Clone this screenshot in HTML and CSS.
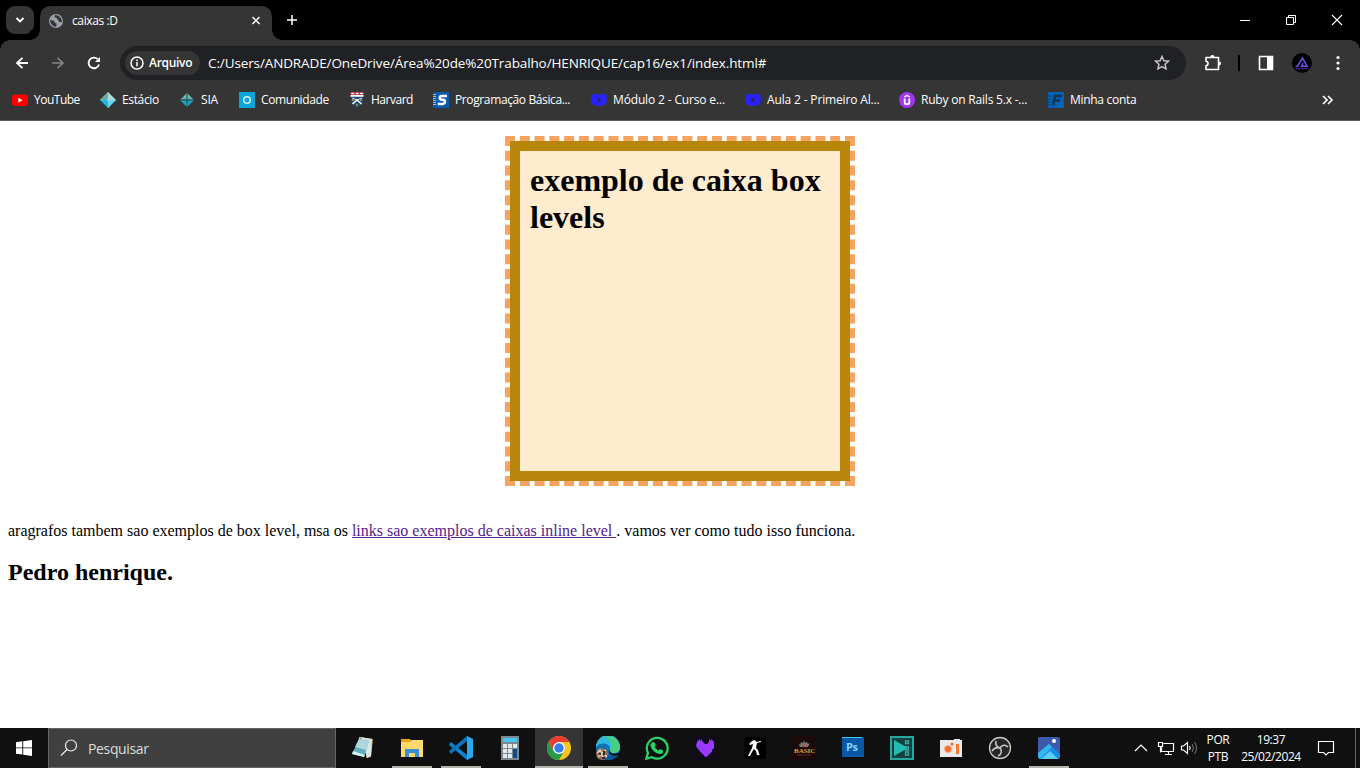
FILE: index.html
```html
<!DOCTYPE html>
<html lang="pt-BR">
<head>
<meta charset="utf-8">
<title>caixas :D</title>
<link rel="stylesheet" href="styles.css">
</head>
<body>
<div class="screen">
  <header class="tabstrip">
    <div class="tab-search"><svg width="28" height="28" viewBox="0 0 28 28"><path d="M10.500 12l3.500 3.500 3.500-3.500" fill="none" stroke="#fff" stroke-width="1.800"/></svg></div>
    <div class="tab">
      <svg class="globe" width="16" height="16" viewBox="0 0 16 16"><circle cx="8" cy="8" r="7" fill="#9aa0a6"/><path d="M2 7c3 0 5 1 5 3 2 0 2 1 1 4-4-1-6-4-6-7zM7 2c-1 2 0 3 2 3 0 2 2 2 2 4h3c0-4-3-7-7-7z" fill="#35363a"/></svg>
      <span class="tab-title">caixas :D</span>
      <svg width="16" height="16" viewBox="0 0 16 16"><path d="M4.500 4l7 7m0-7l-7 7" stroke="#fff" stroke-width="1.500"/></svg>
    </div>
    <svg class="new-tab" width="16" height="16" viewBox="0 0 16 16"><path d="M8 3v10M3 8h10" stroke="#fff" stroke-width="1.500"/></svg>
    <div class="window-buttons">
      <svg width="46" height="40" viewBox="0 0 46 40"><path d="M18 20.500h10" stroke="#fff"/></svg>
      <svg width="46" height="40" viewBox="0 0 46 40"><path d="M18.500 17.500h7v7h-7zM20.500 17.500v-2h7v7h-2" fill="none" stroke="#fff"/></svg>
      <svg width="46" height="40" viewBox="0 0 46 40"><path d="M18 15l10 10m0-10l-10 10" stroke="#fff" stroke-width="1.100"/></svg>
    </div>
  </header>

  <section class="toolbar">
    <div class="navrow">
      <div class="nav-icons">
        <svg width="16" height="16" viewBox="0 0 16 16"><path d="M14 8H3m5.500-5.200L3 8l5.500 5.200" fill="none" stroke="#fff" stroke-width="1.800"/></svg>
        <svg width="16" height="16" viewBox="0 0 16 16"><path d="M2 8h11M7.500 2.800L13 8l-5.500 5.200" fill="none" stroke="#868686" stroke-width="1.600"/></svg>
        <svg width="16" height="16" viewBox="0 0 16 16"><path d="M13 9.500a5.300 5.300 0 1 1-1.300-5.300" fill="none" stroke="#fff" stroke-width="1.800"/><path d="M14 2v5H9z" fill="#fff"/></svg>
      </div>
      <div class="address">
        <div class="chip"><svg width="14" height="14" viewBox="0 0 14 14"><circle cx="7" cy="7" r="6" fill="none" stroke="#fff" stroke-width="1.500"/><path d="M7 6v4.300M7 3.500v1.400" stroke="#fff" stroke-width="1.500"/></svg><span>Arquivo</span></div>
        <span class="url">C:/Users/ANDRADE/OneDrive/Área%20de%20Trabalho/HENRIQUE/cap16/ex1/index.html#</span>
        <svg class="star" width="16" height="16" viewBox="0 0 16 16"><path d="M8 1.500l1.900 4.200 4.600.5-3.400 3.100.9 4.500L8 11.500l-4 2.300.9-4.500-3.400-3.100 4.600-.5z" fill="none" stroke="#c7c7c7" stroke-width="1.500"/></svg>
      </div>
      <div class="actions">
        <svg width="18" height="18" viewBox="0 0 18 18"><path d="M2 3.500h12.500v12H2v-3.700c2.700-.4 2.700-4.200 0-4.600z" fill="none" stroke="#fff" stroke-width="1.600" stroke-linejoin="round"/><path d="M6.300 3a2.100 2.100 0 0 1 4.200 0zM15 7.500a2 2 0 0 1 0 4z" fill="#fff"/></svg>
        <span class="separator"></span>
        <svg width="16" height="16" viewBox="0 0 16 16"><path d="M1.500 1.500h13v13h-13z" fill="none" stroke="#fff" stroke-width="1.600"/><path d="M9 1h6v14H9z" fill="#fff"/></svg>
        <svg width="20" height="20" viewBox="0 0 20 20"><circle cx="10" cy="10" r="10" fill="#000"/><path d="M3.500 13.200h2L10.500 5l4.500 8.200H9.500L11 10" fill="none" stroke="#6c53e8" stroke-width="1.500"/><path d="M3.500 15.500h13" stroke="#5a2a99" stroke-width="1.500" stroke-dasharray="1.500 .5"/></svg>
        <svg width="4" height="16" viewBox="0 0 4 16"><g fill="#fff"><circle cx="2" cy="2.500" r="1.600"/><circle cx="2" cy="8" r="1.600"/><circle cx="2" cy="13.500" r="1.600"/></g></svg>
      </div>
    </div>
    <nav class="bookmarks">
      <div class="bm youtube"><svg width="16" height="16" viewBox="0 0 16 16"><rect y="2.500" width="16" height="11.500" rx="3" fill="#f00"/><path d="M6.300 5.700v5l4.300-2.500z" fill="#fff"/></svg><span>YouTube</span></div>
      <div class="bm estacio"><svg width="16" height="16" viewBox="0 0 16 16"><path d="M8 0l8 8H0z" fill="#acd9d6"/><path d="M0 8h16l-8 8z" fill="#12b5da"/><path d="M8 0v8H0z" fill="#66a49f"/><path d="M8 8h8l-8 8z" fill="#66d4e8"/><path d="M4 4l8 8M8 0v16M12 4l-8 8M0 8h16" stroke="#dcefea" stroke-width=".25"/></svg><span>Estácio</span></div>
      <div class="bm sia"><svg width="16" height="16" viewBox="0 0 16 16"><path d="M8 1l7 7H1z" fill="#75bdb9"/><path d="M1 8h14l-7 7z" fill="#18afd3"/><path d="M8 1v14M1 8h14" stroke="#28565e" stroke-width="1.300"/><path d="M4 5l8 7M12 5l-8 7" stroke="#28565e" stroke-width=".4"/></svg><span>SIA</span></div>
      <div class="bm comunidade"><svg width="16" height="16" viewBox="0 0 16 16"><path d="M0 0h16v16H0z" fill="#0ba5d8"/><circle cx="8" cy="8" r="3.300" fill="none" stroke="#d9f2ed" stroke-width="1.500"/></svg><span>Comunidade</span></div>
      <div class="bm harvard"><svg width="16" height="16" viewBox="0 0 16 16"><path d="M2 3h12v6c0 3-3 5-6 6.500C5 14 2 12 2 9z" fill="#224c78"/><path d="M1.500 0h13v3.500h-13z" fill="#b42d42"/><path d="M2.200 1.500h12" stroke="#eee" stroke-width="1.500" stroke-dasharray="3 1.500"/><path d="M1.500 3.900h13M3.500 12L8 8l4.500 4" fill="none" stroke="#fff" stroke-width="1.600"/><path d="M3 6l5 2 5-2" fill="none" stroke="#fff" stroke-width=".8"/><path d="M3 8h2m6 0h2M7 13h2" stroke="#c39b34" stroke-width="1.700"/></svg><span>Harvard</span></div>
      <div class="bm programacao"><svg width="16" height="16" viewBox="0 0 16 16"><path d="M0 0h16v16H0z" fill="#075bac"/><path d="M1.500 2v12" stroke="#9cb9d3" stroke-width="3" stroke-dasharray="1 1"/><path d="M14 4H9C6 4 6 7.700 9 7.700h1.300c2.700 0 2 4.300-1 4.300H4.700" fill="none" stroke="#fff" stroke-width="2.500"/></svg><span>Programação Básica...</span></div>
      <div class="bm modulo"><svg width="16" height="16" viewBox="0 0 16 16"><path d="M1 3q2-2 4-1 3 1 6 0 2-1 4 1 1 1 .5 3.500 1 3-.8 5Q13 14 8 14t-6.700-2.500q-1.800-2-.8-5Q0 4 1 3z" fill="#2922ff"/><path d="M6.500 5.500v5l4-2.500z" fill="#24265c"/></svg><span>Módulo 2 - Curso e...</span></div>
      <div class="bm aula"><svg width="16" height="16" viewBox="0 0 16 16"><path d="M1 3q2-2 4-1 3 1 6 0 2-1 4 1 1 1 .5 3.500 1 3-.8 5Q13 14 8 14t-6.700-2.500q-1.800-2-.8-5Q0 4 1 3z" fill="#2922ff"/><path d="M6.500 5.500v5l4-2.500z" fill="#24265c"/></svg><span>Aula 2 - Primeiro Al...</span></div>
      <div class="bm ruby"><svg width="16" height="16" viewBox="0 0 16 16"><circle cx="8" cy="8" r="8" fill="#a435f0"/><path d="M5.300 5L8 3.300 10.700 5" fill="none" stroke="#fff" stroke-width="1.400"/><path d="M5.700 6.500v3.400q0 2.300 2.300 2.300t2.300-2.300V6.500" fill="none" stroke="#fff" stroke-width="1.800"/></svg><span>Ruby on Rails 5.x -...</span></div>
      <div class="bm conta"><svg width="16" height="16" viewBox="0 0 16 16"><path d="M0 0h16v16H0z" fill="#0561b2"/><path d="M0 4h4M0 7h3M0 10h3M0 13h3" stroke="#074b86"/><path d="M5 13L7 4h7M6 8.500h6" fill="none" stroke="#17334d" stroke-width="2.400"/></svg><span>Minha conta</span></div>
      <svg class="overflow" width="14" height="12" viewBox="0 0 14 12"><path d="M2 2l4 4-4 4M7 2l4 4-4 4" fill="none" stroke="#fff" stroke-width="1.700"/></svg>
    </nav>
  </section>

  <main class="page">
    <h1 class="box">exemplo de caixa box levels</h1>
    <p class="paragraph">aragrafos tambem sao exemplos de box level, msa os <a class="visited" href="#">links sao exemplos de caixas inline level </a>. vamos ver como tudo isso funciona.</p>
    <h2 class="author">Pedro henrique.</h2>
  </main>

  <footer class="taskbar">
    <div class="start"><svg width="16" height="16" viewBox="0 0 16 16"><path d="M0 2.200L6.300 1.300v6.200H0zM7.200 1.200L16 0v7.500H7.200zM0 8.300h6.300v6.200L0 13.700zM7.200 8.300H16V16l-8.800-1.300z" fill="#fff"/></svg></div>
    <div class="search"><svg width="18" height="18" viewBox="0 0 18 18"><circle cx="11" cy="6.500" r="5.500" fill="none" stroke="#eee" stroke-width="1.200"/><path d="M7 10.500l-6 6" stroke="#eee" stroke-width="1.300"/></svg><span>Pesquisar</span></div>
    <div class="apps">
      <div class="app"><svg width="24" height="24" viewBox="0 0 24 24"><path d="M8 1l14 2-2 18-5 1 5-18z" fill="#bd985b"/><path d="M9 1l12 2-1 17-4 2z" fill="#d9e8e5"/><path d="M8 3l10 2-5 16L1 18z" fill="#62aebd"/><path d="M8 3l10 2-3 9-11-3z" fill="#add7dc"/><path d="M1 18l12 3 1-2L2 15z" fill="#d7f1f1"/><path d="M8 2l12 2" stroke="#d3d3cc" stroke-width="2" stroke-dasharray="1 1"/></svg></div>
      <div class="app running"><svg width="24" height="24" viewBox="0 0 24 24"><path d="M1 3h9l2 2h11v16H1z" fill="#e8a713"/><path d="M1 6h9l2-2h11v17H1z" fill="#ffd96c"/><path d="M5 21v-8h14v8h-4v-4H9v4z" fill="#398ed5"/></svg></div>
      <div class="app running"><svg width="24" height="24" viewBox="0 0 24 24"><path d="M2 6l16 13v5L0 9z" fill="#0b83d1"/><path d="M2 18L18 5V0L0 15z" fill="#0873bc"/><path d="M18 0l6 3v18l-6 3z" fill="#29a7ef"/></svg></div>
      <div class="app"><svg width="24" height="24" viewBox="0 0 24 24"><path d="M3 0h18v24H3z" fill="#788791"/><path d="M5 2h14v4H5z" fill="#47c6ef"/><path d="M5 8h4v4H5zm5 0h4v4h-4zm5 0h4v4h-4zM5 13h4v4H5zm5 0h4v4h-4zM5 18h4v4H5zm5 0h4v4h-4z" fill="#e5e9eb"/><path d="M15 13h4v9h-4z" fill="#124b8a"/></svg></div>
      <div class="app running active"><svg width="24" height="24" viewBox="0 0 24 24"><circle cx="12" cy="12" r="12" fill="#f9c61c"/><path d="M1.600 6A12 12 0 0 1 22.400 6H12l-5.200 9z" fill="#e73d32"/><path d="M1.600 6A12 12 0 0 0 12 24l5.200-9L12 17l-5.200-2z" fill="#279b4a"/><circle cx="12" cy="12" r="6" fill="#fff"/><circle cx="12" cy="12" r="4.700" fill="#347eed"/></svg></div>
      <div class="app running"><svg width="24" height="24" viewBox="0 0 24 24"><circle cx="12" cy="12" r="12" fill="#0d73bc"/><path d="M0 11A12 12 0 0 1 24 11c0 4-3 6-7 6-3 0-4-2-3-4 0-6-9-8-14-2z" fill="#30b9dc"/><path d="M9 .4C18-1 24 5 24 11c0 4-3 6-7 6-3 0-4-2-3-4 3-4 1-8-5-12.600z" fill="#48ce83"/><path d="M9 10c-3 7 4 13 13 9a12 12 0 0 1-11 5C5 20 5 13 9 10z" fill="#07559b"/><path d="M14 13c-1 5 5 6 10 3l-2 3c-7 2-11-1-8-6z" fill="#101010"/><circle cx="6" cy="18" r="6" fill="#8b705a"/><path d="M1 17l3-3 2 3 4-3M2 21l3-3 3 5M7 17l4 4" fill="none" stroke="#e8d0ac" stroke-width="1.500"/><path d="M3 18h2m3-3v4m-2 3h3" stroke="#35263a" stroke-width="2"/></svg></div>
      <div class="app"><svg width="24" height="24" viewBox="0 0 24 24"><path d="M1.300 22.700l1.600-5.900A10.400 10.400 0 1 1 7 21.200z" fill="none" stroke="#25d366" stroke-width="2.300"/><path d="M7.500 6.300h2l1.300 3-1.200 1.500c1 1.700 2.100 2.700 3.900 3.600l1.500-1.500 3 1.500v2c-1.500 2-3.600 2-6.200.8-3-1.400-5-3.500-6-6.100-.8-2-.2-3.700 1.700-4.800z" fill="#25d366"/></svg></div>
      <div class="app"><svg width="24" height="24" viewBox="0 0 24 24"><path d="M0 0h24v24H0z" fill="#100c19"/><path d="M3 6l1-2 1 1V3l2 2V3l2 3 2 2h2l2-2V3l2 2V3l2 2V4l1 3v5l-2 2v2l-2 1v1l-2 1v1l-2 1-2-1v-1l-2-1v-1l-2-1v-1l-2-2-2-3z" fill="#9a39ff"/></svg></div>
      <div class="app"><svg width="24" height="24" viewBox="0 0 24 24"><rect x="1" y="1" width="22" height="22" rx="3"/><path d="M9 5l2-1 2 1v1l5-1v1l-4 1-1 5 2 2 1 4 1 1h-3l-1-4-2-2-2 3-2 4H5l2-4 2-4 1-4-3 1-1-1 3-3z" fill="#fff"/></svg></div>
      <div class="app"><svg width="24" height="24" viewBox="0 0 24 24"><path d="M0 0h24v24H0z" fill="#1c0909"/><path d="M6 7l2 2 1-3 2 1 1-3 1 3 2-1 1 2 2-1-2 4H8z" fill="#777"/><path d="M9 9l6 2" stroke="#be4e2a"/><text x="2" y="17" class="basic">BASIC</text><path d="M5 19h14" stroke="#672519"/></svg></div>
      <div class="app"><svg width="24" height="24" viewBox="0 0 24 24"><path d="M1 1h21l1 1v19H1z" fill="#0759a7"/><path d="M1 1h20v1H1z" fill="#43c7f2"/><text x="5" y="15" class="photoshop">Ps</text></svg></div>
      <div class="app"><svg width="24" height="24" viewBox="0 0 24 24"><path d="M0 0h24v24H0z" fill="#25a8a1"/><path d="M2 2h20v20H2z" fill="#163f40"/><path d="M4 4v16l14-8z" fill="#20bcb1"/><path d="M15.500 5h3v2.500h-3zm0 6h3v3h-3zm0 5h3v3h-3z" fill="none" stroke="#3aaaa3" stroke-width="1.300"/></svg></div>
      <div class="app"><svg width="24" height="24" viewBox="0 0 24 24"><path d="M1 4h14V3h6v1h2v17H1z" fill="#e9e9e9"/><path d="M17 8h3v10h-3z" fill="#f07d2c"/><circle cx="9" cy="13" r="3.500" fill="#f26a26" stroke="#f7b28d"/><circle cx="13" cy="8" r="1.500" fill="#ee6a31"/></svg></div>
      <div class="app"><svg width="24" height="24" viewBox="0 0 24 24"><circle cx="12" cy="12" r="10.500" fill="#272727" stroke="#c8c8c8" stroke-width="1.300"/><path d="M8 5c-1 4 1 6 4 7 2-3 5-4 8-1M12 12c2 3 2 6-2 8M12 12c-3-1-6 0-8 3" fill="none" stroke="#c8c8c8" stroke-width="1.600"/></svg></div>
      <div class="app running"><svg width="24" height="24" viewBox="0 0 24 24"><rect x="1" y="1" width="22" height="22" rx="2" fill="#3c5bad"/><path d="M1 17L12 8l11 10v3l-2 2H3l-2-2z" fill="#168ee6"/><path d="M1 17L12 8l3 3L3 23l-2-2z" fill="#37b5ee"/><path d="M4 23l9-8 8 8z" fill="#5bcdf7"/><circle cx="17" cy="5" r="2" fill="#fff"/></svg></div>
    </div>
    <div class="tray">
      <svg class="tray-icons" width="66" height="20" viewBox="0 0 66 20"><g fill="none" stroke="#fff" stroke-width="1.200"><path d="M1 13l6-6 6 6"/><path d="M29.500 5.500H39.500v8H27.500v-4M31 16.500h7M34.500 13.500v3M24.500 4.500h4v4h-4zM26.500 8.500v6"/><path d="M47.500 8h2l4-3.500v11l-4-3.500h-2zM55.500 8q1.500 2 0 4"/></g><path d="M58 6q3 4 0 8M60.500 4q4 6 0 12" fill="none" stroke="#777"/></svg>
      <div class="language"><span class="por">POR</span><span class="ptb">PTB</span></div>
      <div class="clock"><span class="time">19:37</span><span class="date">25/02/2024</span></div>
      <svg class="notice" width="18" height="18" viewBox="0 0 18 18"><path d="M1.500 2.500h15v11h-5L9 16l-2.500-2.500h-5z" fill="none" stroke="#fff" stroke-width="1.200"/></svg>
      <span class="desktop-edge"></span>
    </div>
  </footer>
</div>
</body>
</html>
```

FILE: styles.css
```css
* { box-sizing: border-box; }
body { margin: 0; background: #fff; overflow: hidden; }
svg { display: block; flex-shrink: 0; }
span { white-space: nowrap; }
.screen { width: 1360px; height: 768px; display: flex; flex-direction: column; font: 12px "Open Sans", "Noto Sans", sans-serif; color: #fff; }
.tabstrip { height: 40px; background: #000; display: flex; flex-shrink: 0; padding-left: 6px; }
.tab-search { width: 28px; height: 28px; margin-top: 6px; border-radius: 9px; background: #353535; }
.tab { position: relative; width: 232px; height: 34px; margin: 6px 0 0 6px; padding: 0 8px 5px; border-radius: 10px 10px 0 0; background: #353535; display: flex; align-items: center; }
.tab::before, .tab::after { content: ""; position: absolute; bottom: 0; width: 10px; height: 10px; }
.tab::before { left: -10px; background: radial-gradient(circle at 0 0, #000 9.5px, #353535 10px); }
.tab::after { right: -10px; background: radial-gradient(circle at 100% 0, #000 9.5px, #353535 10px); }
.tab-title { flex: 1; margin-left: 8px; letter-spacing: -.38px; }
.new-tab { margin: 12px 0 0 12px; }
.window-buttons { display: flex; margin-left: auto; }
.toolbar { height: 81px; flex-shrink: 0; background: linear-gradient(#353535, #353535) 0 10px no-repeat, radial-gradient(circle at 10px 10px, #353535 9.5px, transparent 10px) 0 0 / 10px 10px no-repeat, radial-gradient(circle at 0 10px, #353535 9.5px, transparent 10px) 1350px 0 / 10px 10px no-repeat, linear-gradient(#353535, #353535) 10px 0 / 1340px 10px no-repeat, #000; border-bottom: 1px solid #5b5b5b; }
.navrow { height: 46px; display: flex; align-items: center; }
.nav-icons { width: 120px; display: flex; gap: 20px; padding-left: 14px; }
.address { width: 1066px; height: 34px; border-radius: 17px; background: #202124; display: flex; align-items: center; padding: 0 16px 0 5px; }
.chip { width: 75px; height: 24px; border-radius: 12px; background: #353535; display: flex; align-items: center; gap: 5px; padding-left: 5px; font-weight: 600; letter-spacing: -.3px; }
.chip span, .url { margin-top: -1px; }
.url { margin-left: 8px; font-size: 13.5px; letter-spacing: -.115px; }
.star { margin-left: auto; }
.actions { display: flex; align-items: center; padding-left: 18px; }
.separator { width: 2px; height: 16px; background: #000; margin: 0 18px 0 16px; }
.actions .separator + svg { margin-right: 18px; }
.actions svg:last-child { margin-left: 24px; }
.bookmarks { height: 28px; display: flex; align-items: center; padding-left: 12px; }
.bm { display: flex; align-items: center; gap: 6px; letter-spacing: -.2px; }
.bm span { margin-top: -1px; }
.youtube { width: 88px; letter-spacing: -.5px; }
.estacio { width: 79px; letter-spacing: -.35px; }
.sia { width: 60px; }
.comunidade { width: 110px; letter-spacing: -.4px; }
.harvard { width: 84px; letter-spacing: -.48px; }
.programacao { width: 158px; letter-spacing: -.38px; }
.modulo, .aula { width: 154px; letter-spacing: -.15px; }
.ruby { width: 149px; }
.conta { width: 90px; letter-spacing: -.3px; }
.overflow { margin: 0 25px 0 auto; }
.page { height: 607px; flex-shrink: 0; padding: 20px 8px 0; background: #fff; color: #000; font: 16px "Liberation Serif", "Times New Roman", serif; }
.box { width: 340px; height: 340px; margin: 0 auto; padding: 11px 10px 9px; background: #ffebcd; border: 10px solid #b8860b; outline: 5px dashed #f4a460; font-size: 32px; line-height: 37px; }
.paragraph { margin: 41px 0 0; line-height: 18px; }
.visited { color: #551a8b; }
.author { margin: 19px 0 0; font-size: 24px; line-height: 27px; }
.taskbar { height: 40px; flex-shrink: 0; display: flex; background: #101010; }
.start { width: 48px; display: flex; align-items: center; justify-content: center; }
.search { width: 288px; border: 1px solid #666; background: #404040; display: flex; align-items: center; gap: 10px; padding-left: 11px; font-size: 14px; letter-spacing: -.35px; color: #ddd; }
.apps { display: flex; gap: 1px; margin-left: 3px; }
.app { width: 48px; height: 40px; display: grid; place-items: center; }
.running { background: linear-gradient(#b5b5ae, #b5b5ae) center bottom / 40px 2px no-repeat; }
.active { background-color: #353535; background-size: 48px 2px; }
.basic { font: bold 7px "Liberation Serif", serif; fill: #d8a53e; }
.photoshop { font: bold 11px "Open Sans", sans-serif; letter-spacing: -.3px; fill: #8bd2ff; }
.tray { margin-left: auto; display: flex; align-items: center; }
.tray-icons { margin-right: 6px; }
.language, .clock { height: 34px; display: flex; flex-direction: column; align-items: center; line-height: 17px; letter-spacing: -.4px; }
.language { width: 24px; }
.clock { width: 60px; margin-left: 11px; }
.notice { margin-left: 16px; }
.desktop-edge { width: 1px; height: 40px; background: #666; margin: 0 4px 0 20px; }
```
